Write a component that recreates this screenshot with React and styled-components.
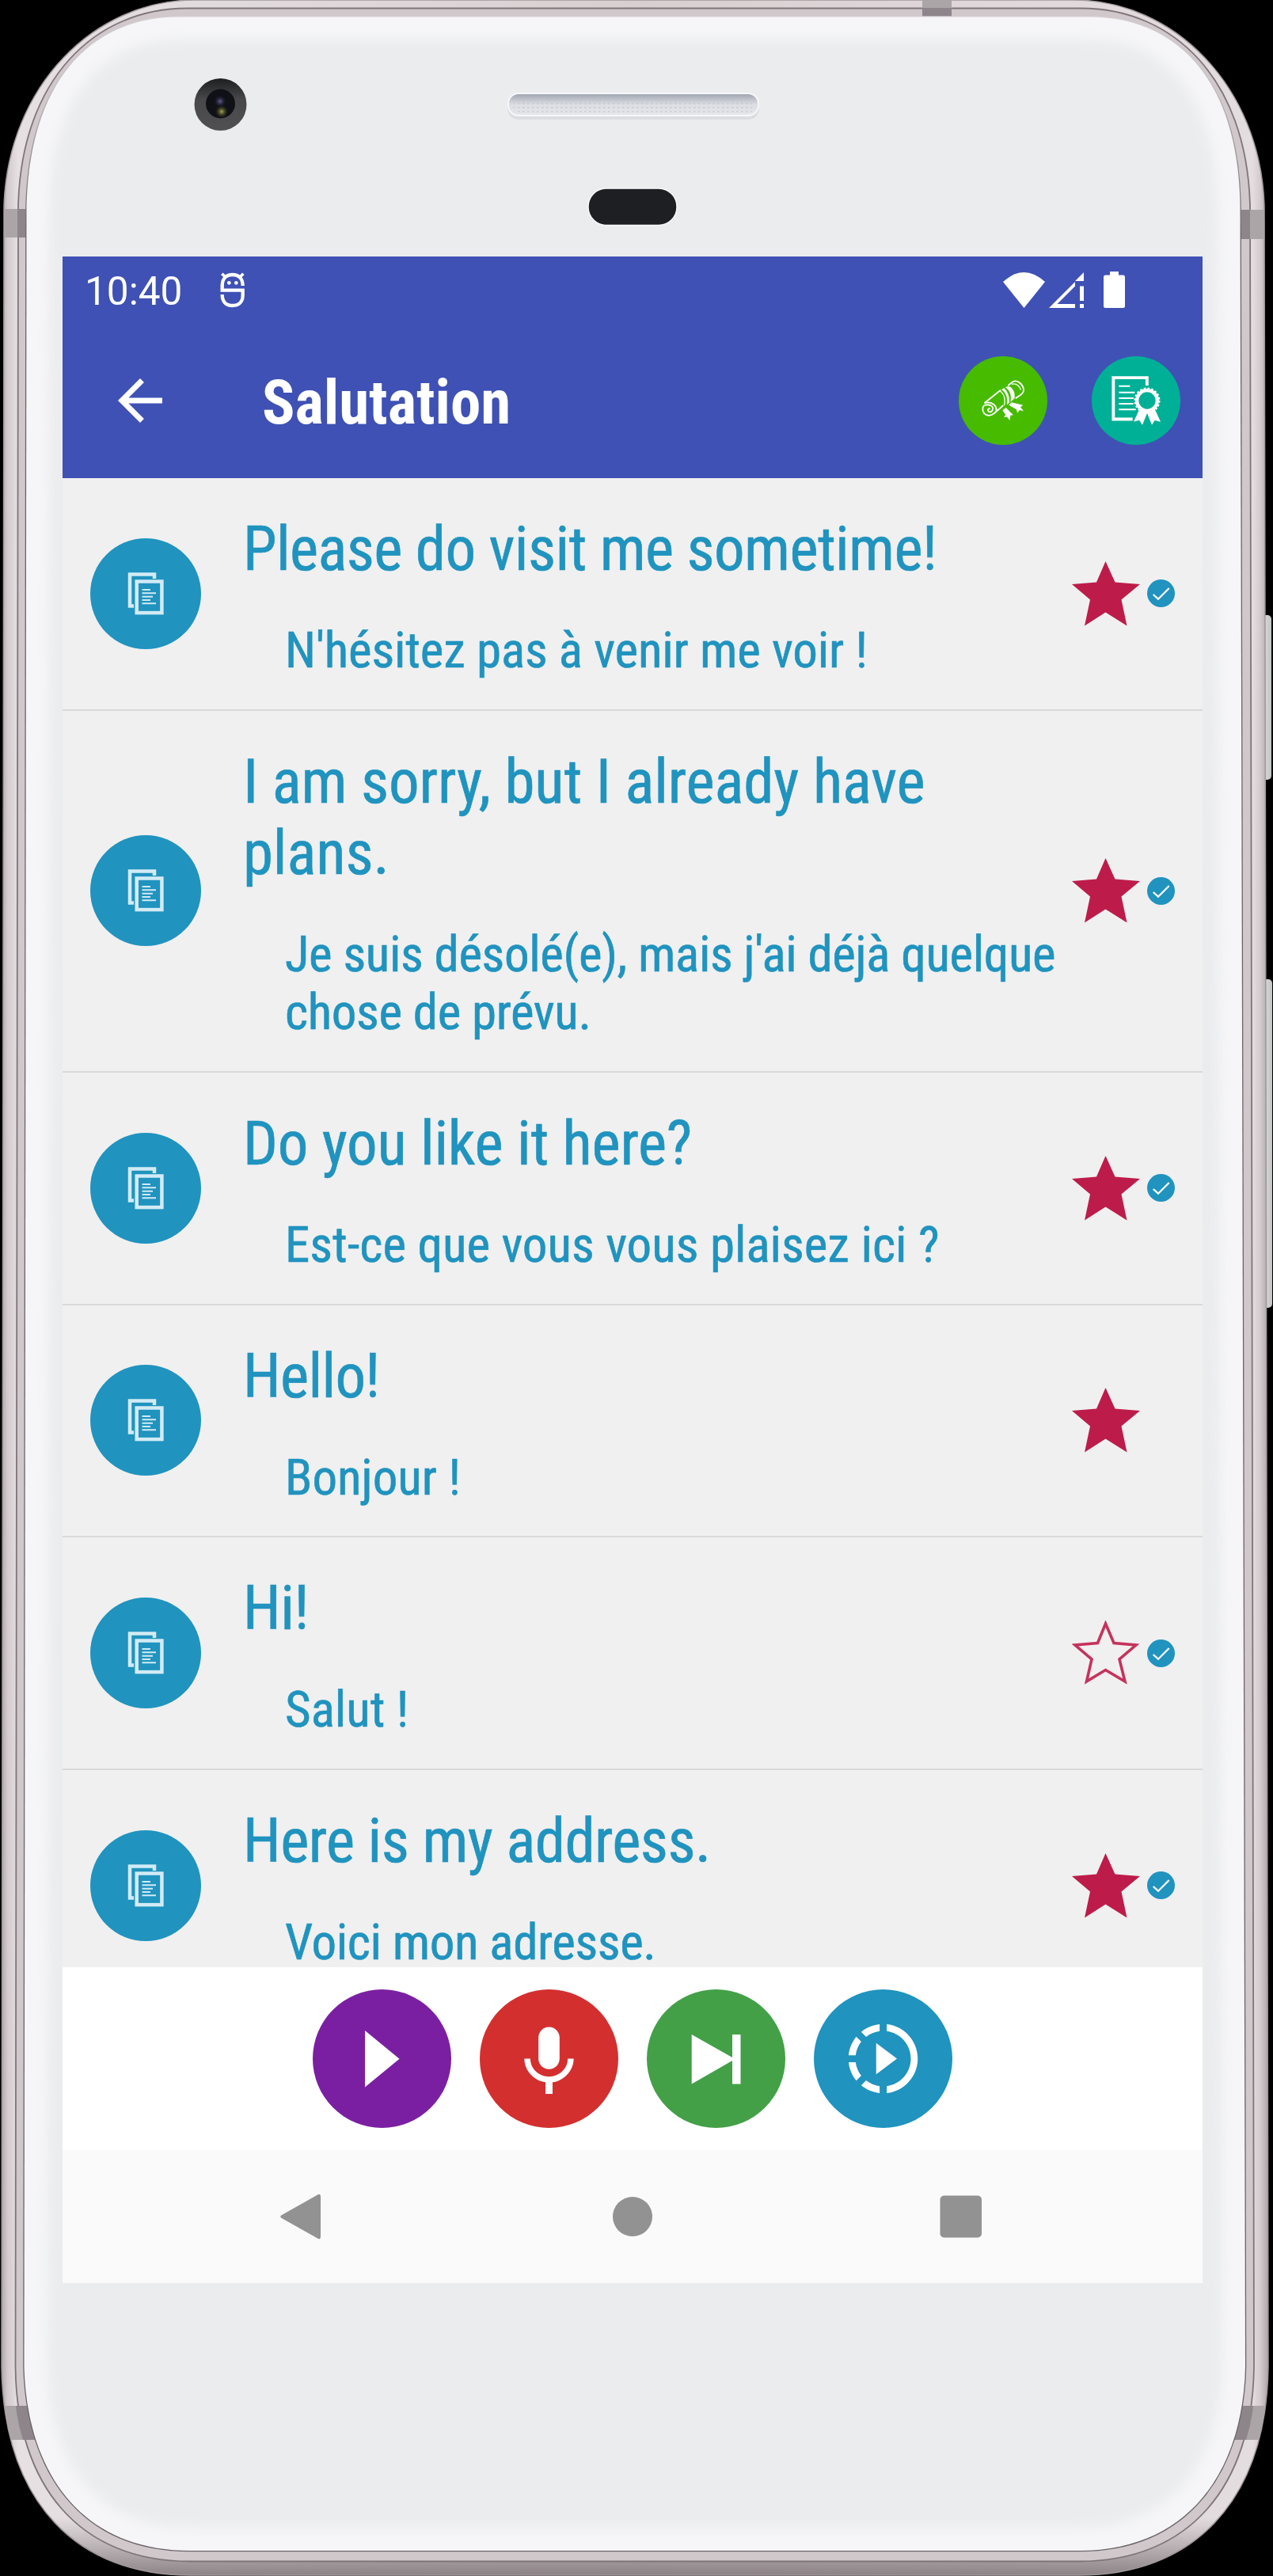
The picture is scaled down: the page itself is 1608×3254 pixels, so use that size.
import React from 'react';
import styled, { createGlobalStyle } from 'styled-components';

const GlobalStyle = createGlobalStyle`
    body {
        margin: 0;
        background: #000;
        font-family: 'Roboto Condensed', Roboto, sans-serif;
    }
`

const Device = styled.div`
    position: relative;
    box-sizing: border-box;
    width: 1608px;
    height: 3254px;
    padding: 324px 89px 0 79px;
    overflow: hidden;
`

const Chassis = styled.svg`
    position: absolute;
    top: 0;
    left: 0;
`

const Screen = styled.main`
    position: relative;
    display: flex;
    flex-direction: column;
    width: 1440px;
    height: 2560px;
    background: #f0f0f0;
`

const StatusBar = styled.div`
    display: flex;
    align-items: center;
    height: 84px;
    padding: 0 98px 0 28px;
    background: #3f51b5;
    color: white;
`

const Clock = styled.span`
    width: 170px;
    padding-top: 4px;
    font-family: Roboto, sans-serif;
    font-size: 49.5px;
    line-height: 58px;
`

const StatusIcons = styled.div`
    display: flex;
    align-items: center;
    margin-left: auto;

    svg + svg {
        margin-left: 5px;
    }
    svg:last-child {
        margin-left: 25px;
    }
`

const AppBar = styled.header`
    display: flex;
    align-items: center;
    height: 196px;
    padding: 0 28px 0 56px;
    background: #3f51b5;
    color: white;
`

const Title = styled.h1`
    flex: 1;
    margin: 0 0 0 112px;
    padding-top: 6px;
    font-size: 77px;
    font-weight: 700;
    line-height: 90px;
`

const Actions = styled.div`
    display: flex;
    gap: 56px;
`

const RoundButton = styled.button`
    display: flex;
    flex: none;
    align-items: center;
    justify-content: center;
    width: ${props => props.$size}px;
    height: ${props => props.$size}px;
    padding: 0;
    border: 0;
    border-radius: 50%;
    background: ${props => props.$color};
`

const List = styled.ul`
    flex: 1;
    min-height: 0;
    margin: 0;
    padding: 0;
    overflow: hidden;
    list-style: none;
`

const Row = styled.li`
    display: flex;
    align-items: center;
    padding: 0 35px;
    border-bottom: 2px solid #d9d9d9;
    color: #2093bf;
`

const Texts = styled.div`
    flex: 1;
    padding: 45px 0 37.2px 53px;
    -webkit-text-stroke: 0.6px #2093bf;
`

const Phrase = styled.div`
    font-size: 77px;
    line-height: 90px;
    letter-spacing: ${props => props.$tracking}px;
`

const Translation = styled.div`
    margin-top: 46px;
    padding-left: 53px;
    font-size: 63px;
    line-height: 73.5px;
    letter-spacing: ${props => props.$tracking}px;
`

const CheckSlot = styled.div`
    display: flex;
    width: 35px;
    margin-left: 9px;
`

const Player = styled.div`
    display: flex;
    flex: none;
    align-items: center;
    justify-content: center;
    gap: 36px;
    height: 231px;
    background: white;
`

const NavBar = styled.nav`
    display: flex;
    flex: none;
    align-items: center;
    justify-content: center;
    gap: 357px;
    height: 168px;
    background: #fafafa;
`

const outer = 'M246 0 C120 0 10 108 5 260 L2 2990 C5 3165 100 3253 240 3253 H1363 C1503 3253 1599 3165 1602 2990 L1597 260 C1592 108 1482 0 1356 0 Z';
const middle = 'M236 10.5 C120 10.5 27 100 23 260 L19.5 2990 C21 3140 100 3235.5 240 3235.5 H1363 C1503 3235.5 1582 3140 1584 2990 L1579 260 C1575 100 1482 10.5 1366 10.5 Z';
const face = 'M225 21.5 C125 21.5 38 90 33.5 260 L30.5 2990 C34 3120 100 3222 240 3222 H1363 C1503 3222 1570 3120 1573 2990 L1566.5 260 C1564 90 1477 21.5 1377 21.5 Z';

const PhoneBody = () => (
    <Chassis width="1608" height="3254" viewBox="0 0 1608 3254">
        <defs>
            <linearGradient id="metal" x1="0" x2="1608" y1="0" y2="0" gradientUnits="userSpaceOnUse">
                <stop offset="0" stopColor="#a79ea1" />
                <stop offset="0.006" stopColor="#d3cbce" />
                <stop offset="0.014" stopColor="#e6e0e2" />
                <stop offset="0.5" stopColor="#d8cfd1" />
                <stop offset="0.984" stopColor="#e4dddf" />
                <stop offset="0.99" stopColor="#d3cbce" />
                <stop offset="0.997" stopColor="#aaa1a4" />
            </linearGradient>
            <linearGradient id="foot" x1="0" x2="0" y1="3180" y2="3254" gradientUnits="userSpaceOnUse">
                <stop offset="0" stopColor="#857b7f" stopOpacity="0" />
                <stop offset="1" stopColor="#7d7377" stopOpacity="0.85" />
            </linearGradient>
            <linearGradient id="rim" x1="0" x2="0" y1="0" y2="300" gradientUnits="userSpaceOnUse">
                <stop offset="0" stopColor="#d9d4d6" />
                <stop offset="0.35" stopColor="#c5c0c2" />
                <stop offset="1" stopColor="#6b6467" />
            </linearGradient>
            <linearGradient id="grille" x1="0" x2="0" y1="0" y2="1">
                <stop offset="0" stopColor="#9da2ae" />
                <stop offset="0.3" stopColor="#c3c6ce" />
                <stop offset="0.5" stopColor="#dcdee3" />
                <stop offset="1" stopColor="#e6e7ea" />
            </linearGradient>
            <pattern id="mesh" width="6" height="5" patternUnits="userSpaceOnUse">
                <rect width="2.5" height="2" fill="#b9bcc6" opacity="0.45" />
            </pattern>
            <linearGradient id="key" x1="0" x2="1" y1="0" y2="0">
                <stop offset="0" stopColor="#8f9090" />
                <stop offset="0.4" stopColor="#d4d6d5" />
                <stop offset="1" stopColor="#c2c4c3" />
            </linearGradient>
            <linearGradient id="cam" x1="0" x2="0" y1="0" y2="1">
                <stop offset="0" stopColor="#1d1e20" />
                <stop offset="0.4" stopColor="#48484b" />
                <stop offset="1" stopColor="#505053" />
            </linearGradient>
            <radialGradient id="violet">
                <stop offset="0" stopColor="#62609a" />
                <stop offset="1" stopColor="#14151c" stopOpacity="0" />
            </radialGradient>
            <radialGradient id="olive">
                <stop offset="0" stopColor="#a9a85a" />
                <stop offset="1" stopColor="#3a3a1c" stopOpacity="0" />
            </radialGradient>
            <filter id="soft" x="-5%" y="-5%" width="110%" height="110%">
                <feGaussianBlur stdDeviation="8" />
            </filter>
            <clipPath id="outerClip"><path d={outer} /></clipPath>
            <clipPath id="faceClip"><path d={face} /></clipPath>
        </defs>

        <rect x="1594" y="777" width="12" height="208" rx="5" fill="url(#key)" />
        <rect x="1594" y="1237" width="13" height="415" rx="5" fill="url(#key)" />

        <path d={outer} fill="url(#metal)" />
        <path d={outer} fill="url(#foot)" />
        <path d={outer} fill="none" stroke="#a0979a" strokeWidth="1.5" />
        <path d={middle} fill="#d0c8cb" stroke="#7f7579" strokeWidth="1.8" />
        <g clipPath="url(#outerClip)">
            <g fill="#aca5a8">
                <rect x="1165" y="0" width="37" height="22" />
                <rect x="0" y="264" width="40" height="36" />
                <rect x="1560" y="265" width="40" height="37" />
                <rect x="0" y="3039" width="45" height="43" />
                <rect x="1555" y="3039" width="50" height="43" />
            </g>
            <g fill="#8d8589">
                <rect x="1165" y="10" width="37" height="12" />
                <rect x="22" y="264" width="15" height="36" />
                <rect x="1563" y="265" width="16" height="37" />
                <path d="M20 3039 H45 V3082 H29 Q22 3060 20 3039 Z" />
                <path d="M1583 3039 H1560 V3082 H1574 Q1581 3060 1583 3039 Z" />
            </g>
        </g>
        <path d={face} fill="#ebecee" stroke="url(#rim)" strokeWidth="2.6" />
        <g clipPath="url(#faceClip)">
            <path d={face} fill="none" stroke="#f6f6f8" strokeWidth="58" filter="url(#soft)" />
        </g>

        <circle cx="278.5" cy="132" r="33" fill="url(#cam)" />
        <circle cx="278.5" cy="131" r="18.5" fill="#101116" />
        <circle cx="278" cy="128" r="8" fill="url(#violet)" />
        <circle cx="280" cy="141" r="8" fill="url(#olive)" />

        <rect x="641" y="119" width="318" height="32" rx="14" fill="#dcdde0" />
        <rect x="642" y="118" width="316" height="28" rx="13" fill="url(#grille)" stroke="#f6f7fa" strokeWidth="2" />
        <rect x="648" y="126" width="304" height="18" rx="9" fill="url(#mesh)" />
        <rect x="743" y="238" width="112" height="46.5" rx="23" fill="#1d1f23" stroke="#f8f8f9" strokeWidth="1.5" />
    </Chassis>
);

const DebugIcon = () => (
    <svg width="34" height="46.7" viewBox="40 40 102 140" fill="none" stroke="white" strokeWidth="13">
        <path d="M129 94 C129 66 113 52 90 52 C67 52 51 66 51 94 V111 H129 V130 C129 156 113 169 90 169 C67 169 51 156 51 127" />
        <path d="M50 48 L63 61 M131 48 L118 61" strokeWidth="11" />
        <circle cx="77" cy="83" r="7" fill="white" stroke="none" />
        <circle cx="104" cy="83" r="7" fill="white" stroke="none" />
    </svg>
);

const WifiIcon = () => (
    <svg width="53" height="45" viewBox="0 0 53 45" fill="white">
        <path d="M26.5 45 L0 12 Q26.5 -12 53 12 Z" />
    </svg>
);

const SignalIcon = () => (
    <svg width="44" height="45" viewBox="0 0 44 45" fill="white">
        <path d="M0 45 L33 12 V17.5 L10.5 40 H33 V45 Z" />
        <path d="M44 0 V11 H33 Z M39 17.5 H44 V36 H39 Z M39 40 H44 V45 H39 Z" />
    </svg>
);

const BatteryIcon = () => (
    <svg width="27" height="46" viewBox="0 0 27 46" fill="white">
        <path d="M8 0 H19 V4.5 H24.5 Q27 4.5 27 7 V43.5 Q27 46 24.5 46 H2.5 Q0 46 0 43.5 V7 Q0 4.5 2.5 4.5 H8 Z" />
    </svg>
);

const BackIcon = () => (
    <svg width="84" height="84" viewBox="0 0 24 24" fill="white">
        <path d="M20 11H7.83l5.59-5.59L12 4l-8 8 8 8 1.41-1.41L7.83 13H20v-2z" />
    </svg>
);

const ScrollIcon = () => (
    <svg width="112" height="112" viewBox="93 420 336 336" fill="none" stroke="white" strokeWidth="5.5">
        <path d="M191 597 L252 548" />
        <path d="M190 597 C214 590 240 604 235 630" />
        <path d="M190 606 C206 600 225 608 222 622 C219 634 204 634 204 624 C204 619 208 617 212 620" />
        <path d="M189 606 C180 618 183 640 203 644 C212 646 220 642 228 636 L262 606" />
        <path d="M250 552 C264 562 270 582 266 606" strokeWidth="4" />
        <path d="M256 547 C272 556 280 578 276 603 L284 596 C286 574 278 552 264 541 Z" fill="white" strokeWidth="1" />
        <path d="M270 538 C288 548 294 570 290 592 L304 580 C308 556 296 538 282 534 Z" fill="white" strokeWidth="1" />
        <path d="M280 531 L298 517 C312 508 332 522 338 540 C341 552 337 560 328 566 L308 580" />
        <path d="M294 526 C312 520 326 536 328 548" strokeWidth="4" />
        <path d="M259 625 L272 615 L300 643 L289 644 L287 663 L276 650 L264 650 L271 642 Z" fill="white" stroke="none" />
        <path d="M283 605 L293 595 L337 605 L327 613 L339 628 L324 624 L315 635 L312 622 Z" fill="white" stroke="none" />
    </svg>
);

const DiplomaIcon = () => (
    <svg width="112" height="112" viewBox="597 420 336 336" fill="none" stroke="white">
        <path d="M806.5 531 V501.5 H679 V658.5 H752" strokeWidth="11.5" />
        <path d="M700 533 H742 M700 557 H760 M700 579 H756 M700 600 H755 M700 622 H764" strokeWidth="6" />
        <circle cx="807" cy="588" r="38.5" strokeWidth="13" />
        <circle cx="807" cy="588" r="46" strokeWidth="7" strokeDasharray="8 6.45" />
        <path d="M778 620 L756 668 L777 662 L789 680 L807 636 L825 680 L836 663 L858 668 L836 620 L807 630 Z" fill="white" stroke="none" />
    </svg>
);

const PagesIcon = () => (
    <svg width="140" height="140" viewBox="0 0 140 140" fill="none" stroke="#d2ebf5">
        <path d="M81 51 V45.5 H50 V85.5 H55" strokeWidth="4.5" />
        <rect x="58.7" y="54.5" width="31.7" height="39.6" strokeWidth="4.5" />
        <path d="M65.5 65 H76 M65.5 69.3 H83 M65.5 73.7 H79 M65.5 78 H76 M65.5 82.3 H83" strokeWidth="2" />
    </svg>
);

const StarIcon = ({ filled }) => (
    <svg width="86" height="82" viewBox="0 0 86 82">
        {filled
            ? <path d="M42.5 0 L54.5 26.5 L86 29 L62.5 48.5 L69.5 81.5 L42.5 64.5 L16 81.5 L23 48.5 L0 29 L31 26.5 Z" fill="#bd1c4a" />
            : <path d="M42.5 4 L53 28.5 L81 31 L60 49 L67 77 L42.5 62.5 L18.5 77 L25 49 L4 31 L32.5 28.5 Z" fill="none" stroke="#c6325c" strokeWidth="3.6" />
        }
    </svg>
);

const CheckIcon = () => (
    <svg width="35" height="35" viewBox="0 0 35 35" fill="none">
        <circle cx="17.5" cy="17.5" r="17.5" fill="#2093bf" />
        <path d="M7.7 19 L14 24.7 L27.7 11" stroke="white" strokeWidth="2.3" />
    </svg>
);

const PlayIcon = () => (
    <svg width="175" height="175" viewBox="0 0 175 175" fill="white">
        <path d="M66 52 L109.5 87.7 L66 123.5 Z" />
    </svg>
);

const MicIcon = () => (
    <svg width="175" height="175" viewBox="0 0 175 175" fill="white">
        <path transform="translate(34.1 38.5) scale(4.45)" d="M12 14c1.66 0 2.99-1.34 2.99-3L15 5c0-1.66-1.34-3-3-3S9 3.34 9 5v6c0 1.66 1.34 3 3 3zm5.3-3c0 3-2.54 5.1-5.3 5.1S6.7 14 6.7 11H5c0 3.41 2.72 6.23 6 6.72V21h2v-3.28c3.28-.48 6-3.3 6-6.72h-1.7z" />
    </svg>
);

const NextIcon = () => (
    <svg width="175" height="175" viewBox="0 0 175 175" fill="white">
        <path d="M56.7 57 L108 86 V57 H118.5 V119.5 H108 V90 L56.7 119.5 Z" />
    </svg>
);

const SlowIcon = () => (
    <svg width="105" height="105" viewBox="0 0 24 24" fill="white">
        <path d="M10 7.5v9L16 12zM11 4.07V2.05c-2.01.2-3.84 1-5.32 2.21L7.1 5.69c1.11-.86 2.44-1.44 3.9-1.62zM5.69 7.1L4.26 5.68C3.05 7.16 2.25 8.99 2.05 11h2.02c.18-1.46.76-2.79 1.62-3.9zM4.07 13H2.05c.2 2.01 1 3.84 2.21 5.32l1.43-1.43c-.86-1.1-1.44-2.43-1.62-3.89zm1.61 6.74C7.16 20.95 9 21.75 11 21.95v-2.02c-1.46-.18-2.79-.76-3.9-1.62l-1.42 1.43zM22 12c0 5.16-3.92 9.42-8.95 9.95v-2.02C16.97 19.41 20 16.05 20 12s-3.03-7.41-6.95-7.93V2.05C18.08 2.58 22 6.84 22 12z" />
    </svg>
);

// tracking: letter spacing of the phrase and of its translation
const phrases = [
    { en: 'Please do visit me sometime!', fr: "N'hésitez pas à venir me voir !", tracking: [-0.62, -0.15], starred: true, checked: true },
    { en: 'I am sorry, but I already have plans.', fr: "Je suis désolé(e), mais j'ai déjà quelque chose de prévu.", tracking: [-0.1, -0.35], starred: true, checked: true },
    { en: 'Do you like it here?', fr: 'Est-ce que vous vous plaisez ici ?', tracking: [-0.2, 0], starred: true, checked: true },
    { en: 'Hello!', fr: 'Bonjour !', tracking: [-0.7, 0], starred: true, checked: false },
    { en: 'Hi!', fr: 'Salut !', tracking: [-0.4, 0], starred: false, checked: true },
    { en: 'Here is my address.', fr: 'Voici mon adresse.', tracking: [-0.55, -0.37], starred: true, checked: true },
];

const PhraseRow = ({ en, fr, tracking, starred, checked }) => (
    <Row>
        <RoundButton $size={140} $color="#2093bf"><PagesIcon /></RoundButton>
        <Texts>
            <Phrase $tracking={tracking[0]}>{en}</Phrase>
            <Translation $tracking={tracking[1]}>{fr}</Translation>
        </Texts>
        <StarIcon filled={starred} />
        <CheckSlot>{checked && <CheckIcon />}</CheckSlot>
    </Row>
);

const App = () => (
    <Device>
        <GlobalStyle />
        <PhoneBody />
        <Screen>
            <StatusBar>
                <Clock>10:40</Clock>
                <DebugIcon />
                <StatusIcons>
                    <WifiIcon />
                    <SignalIcon />
                    <BatteryIcon />
                </StatusIcons>
            </StatusBar>
            <AppBar>
                <BackIcon />
                <Title>Salutation</Title>
                <Actions>
                    <RoundButton $size={112} $color="#46bb00"><ScrollIcon /></RoundButton>
                    <RoundButton $size={112} $color="#00b096"><DiplomaIcon /></RoundButton>
                </Actions>
            </AppBar>
            <List>
                {phrases.map(phrase => <PhraseRow key={phrase.en} {...phrase} />)}
            </List>
            <Player>
                <RoundButton $size={175} $color="#7b1fa2"><PlayIcon /></RoundButton>
                <RoundButton $size={175} $color="#d32f2f"><MicIcon /></RoundButton>
                <RoundButton $size={175} $color="#43a047"><NextIcon /></RoundButton>
                <RoundButton $size={175} $color="#2093bf"><SlowIcon /></RoundButton>
            </Player>
            <NavBar>
                <svg width="60" height="60" viewBox="0 0 60 60" fill="#929292">
                    <path d="M3 28.5 L50 2 Q53 1 53 5 V55 Q53 59 50 58 L3 31.5 Q1.5 30 3 28.5 Z" />
                </svg>
                <svg width="60" height="60" viewBox="0 0 60 60" fill="#929292">
                    <circle cx="30" cy="30" r="25" />
                </svg>
                <svg width="60" height="60" viewBox="0 0 60 60" fill="#929292">
                    <rect x="1.5" y="3.5" width="52.5" height="53" rx="5" />
                </svg>
            </NavBar>
        </Screen>
    </Device>
);

export default App;
